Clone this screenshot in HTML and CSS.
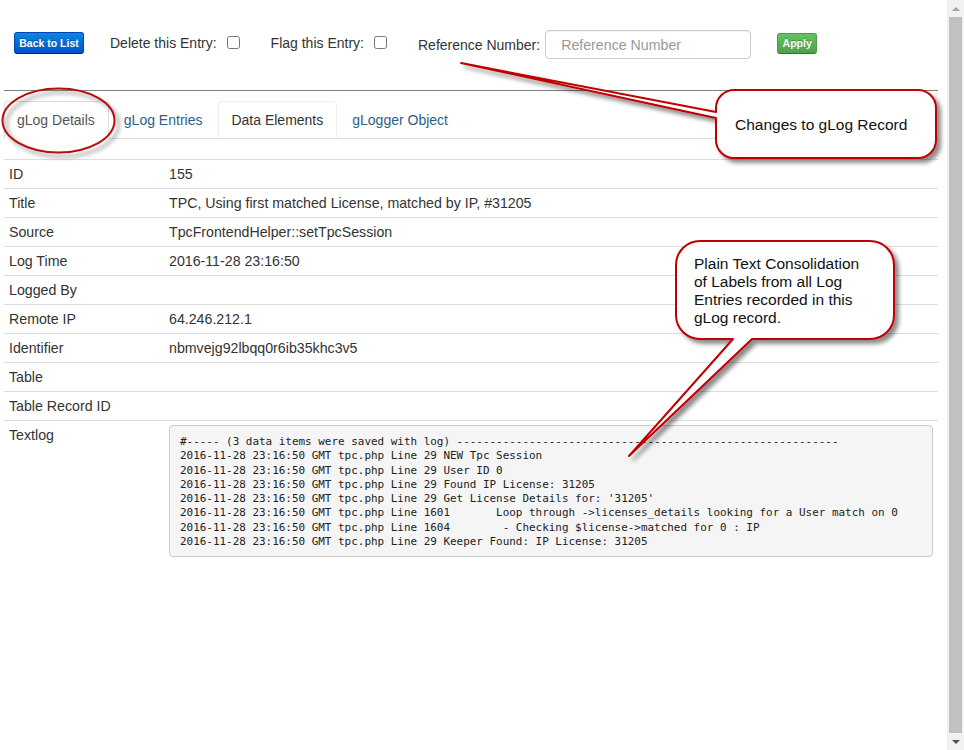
FILE: index.html
```html
<!DOCTYPE html>
<html>
<head>
<meta charset="utf-8">
<title>gLog Record</title>
<link rel="stylesheet" href="styles.css">
</head>
<body>
<div class="page">
  <div class="main">
    <div class="toolbar">
      <button class="btn btn-primary">Back to List</button>
      <label class="field field-first">Delete this Entry: <input type="checkbox" class="check"></label>
      <label class="field">Flag this Entry: <input type="checkbox" class="check"></label>
      <label class="field field-ref">Reference Number:</label>
      <input type="text" class="ref-input" placeholder="Reference Number">
      <button class="btn btn-success">Apply</button>
    </div>
    <div class="rule"></div>
    <ul class="tabs">
      <li class="tab active"><span>gLog Details</span></li>
      <li class="tab"><span>gLog Entries</span></li>
      <li class="tab hover"><span>Data Elements</span></li>
      <li class="tab"><span>gLogger Object</span></li>
    </ul>
    <table class="details">
      <tr><td class="label">ID</td><td>155</td></tr>
      <tr><td class="label">Title</td><td>TPC, Using first matched License, matched by IP, #31205</td></tr>
      <tr><td class="label">Source</td><td>TpcFrontendHelper::setTpcSession</td></tr>
      <tr><td class="label">Log Time</td><td>2016-11-28 23:16:50</td></tr>
      <tr><td class="label">Logged By</td><td></td></tr>
      <tr><td class="label">Remote IP</td><td>64.246.212.1</td></tr>
      <tr><td class="label">Identifier</td><td>nbmvejg92lbqq0r6ib35khc3v5</td></tr>
      <tr><td class="label">Table</td><td></td></tr>
      <tr><td class="label">Table Record ID</td><td></td></tr>
      <tr class="last"><td class="label">Textlog</td><td><pre class="log">#----- (3 data items were saved with log) ----------------------------------------------------------
2016-11-28 23:16:50 GMT tpc.php Line 29 NEW Tpc Session
2016-11-28 23:16:50 GMT tpc.php Line 29 User ID 0
2016-11-28 23:16:50 GMT tpc.php Line 29 Found IP License: 31205
2016-11-28 23:16:50 GMT tpc.php Line 29 Get License Details for: '31205'
2016-11-28 23:16:50 GMT tpc.php Line 1601       Loop through -&gt;licenses_details looking for a User match on 0
2016-11-28 23:16:50 GMT tpc.php Line 1604        - Checking $license-&gt;matched for 0 : IP
2016-11-28 23:16:50 GMT tpc.php Line 29 Keeper Found: IP License: 31205</pre></td></tr>
    </table>

    <svg class="annotations" width="947" height="750" viewBox="0 0 947 750">
      <defs>
        <filter id="shadow" x="-20%" y="-20%" width="140%" height="160%">
          <feDropShadow dx="4" dy="4" stdDeviation="2" flood-color="#000" flood-opacity="0.45"/>
        </filter>
      </defs>
      <ellipse cx="58.5" cy="120.5" rx="56" ry="32" class="mark" filter="url(#shadow)"/>
      <path class="callout" filter="url(#shadow)" d="M734,90 H918 A18,18 0 0 1 936,108 V140 A18,18 0 0 1 918,158 H734 A18,18 0 0 1 716,140 V118 L461,63 L716,112 V108 A18,18 0 0 1 734,90 Z"/>
      <text class="note" x="735" y="130">Changes to gLog Record</text>
      <path class="callout" filter="url(#shadow)" d="M700,241 H870 A24,24 0 0 1 894,265 V315 A24,24 0 0 1 870,339 H752 L629,456 L733,339 H700 A24,24 0 0 1 676,315 V265 A24,24 0 0 1 700,241 Z"/>
      <text class="note" x="694" y="269">Plain Text Consolidation</text>
      <text class="note" x="694" y="287">of Labels from all Log</text>
      <text class="note" x="694" y="305">Entries recorded in this</text>
      <text class="note" x="694" y="323">gLog record.</text>
    </svg>
  </div>
  <div class="scrollbar">
    <div class="sb-arrow"><span class="tri-up"></span></div>
    <div class="sb-thumb"></div>
    <div class="sb-arrow"><span class="tri-down"></span></div>
  </div>
</div>
</body>
</html>
```
FILE: styles.css
```css
* { box-sizing: border-box; }
html, body {
  margin: 0;
  padding: 0;
  background: #fff;
}
body {
  font-family: "Liberation Sans", Arial, sans-serif;
  font-size: 14px;
  color: #333;
}
.page {
  display: flex;
  width: 964px;
  height: 750px;
  overflow: hidden;
}
.main {
  flex: 1;
  position: relative;
  padding: 0 9px 0 4px;
}

/* toolbar */
.toolbar {
  margin-top: 30px;
  height: 29px;
  display: flex;
  align-items: center;
  padding-left: 10px;
}
.btn {
  border: 1px solid;
  border-radius: 3px;
  color: #fff;
  font-family: "Liberation Sans", Arial, sans-serif;
  font-weight: bold;
  font-size: 10.5px;
  padding: 0;
  text-shadow: 0 -1px 0 rgba(0,0,0,0.25);
}
.btn-primary {
  width: 70px;
  height: 22px;
  margin-bottom: 3px;
  background: linear-gradient(#0b87e0, #0050cc);
  border-color: #0046b8 #0046b8 #002a80;
}
.btn-success {
  width: 40px;
  height: 21px;
  margin-left: 26px;
  margin-bottom: 3px;
  background: linear-gradient(#62c462, #4ca34c);
  border-color: #4a9a4a #4a9a4a #387038;
}
.field {
  display: flex;
  align-items: center;
  margin-left: 31px;
  margin-bottom: 4px;
  color: #333;
}
.field-first { margin-left: 26px; }
.field-ref { margin-bottom: 0; }
.check {
  width: 13px;
  height: 13px;
  margin: 0 0 0 10px;
}
.ref-input {
  margin-left: 5px;
  width: 206px;
  height: 29px;
  border: 1px solid #ccc;
  border-radius: 4px;
  padding: 0 15px;
  font-family: "Liberation Sans", Arial, sans-serif;
  font-size: 14.2px;
  color: #555;
  box-shadow: inset 0 1px 1px rgba(0,0,0,0.05);
}
.ref-input::placeholder { color: #999; }

.rule {
  margin-top: 31px;
  border-top: 1px solid #808080;
}

/* tabs */
.tabs {
  list-style: none;
  margin: 10px 0 0;
  padding: 0;
  display: flex;
  border-bottom: 1px solid #ddd;
}
.tab {
  margin-right: 2px;
  margin-bottom: -1px;
  padding: 8px 13px 8px 12px;
  line-height: 20px;
  border: 1px solid transparent;
  border-radius: 4px 4px 0 0;
  color: #2b5f86;
}
.tab.active {
  color: #555;
  background: #fff;
  border-color: #ddd #ddd transparent;
}
.tab.hover {
  color: #333;
  border-color: #eee #eee #ddd;
}

/* details table */
.details {
  margin-top: 20px;
  width: 100%;
  border-collapse: collapse;
  font-size: 14.2px;
}
.details td {
  border-top: 1px solid #ddd;
  padding: 4px 5px;
  line-height: 20px;
  vertical-align: top;
  height: 29px;
}
.details td.label {
  width: 160px;
}
.log {
  margin: 0;
  padding: 9px 9px 7px 10px;
  font-family: "DejaVu Sans Mono", "Liberation Mono", monospace;
  font-size: 10.95px;
  line-height: 14.3px;
  color: #222;
  background: #f5f5f5;
  border: 1px solid #ccc;
  border-radius: 4px;
  white-space: pre;
  overflow: hidden;
}

/* annotations */
.annotations {
  position: absolute;
  top: 0;
  left: 0;
  pointer-events: none;
  overflow: visible;
}
.mark {
  fill: none;
  stroke: #b40e0e;
  stroke-width: 2;
}
.callout {
  fill: #fff;
  stroke: #c00000;
  stroke-width: 2;
  stroke-linejoin: round;
}
.note {
  font-family: "Liberation Sans", Arial, sans-serif;
  font-size: 15.5px;
  fill: #111;
}

/* scrollbar */
.scrollbar {
  width: 17px;
  background: #f1f1f1;
  display: flex;
  flex-direction: column;
}
.sb-arrow {
  height: 17px;
  display: flex;
  align-items: center;
  justify-content: center;
}
.sb-thumb {
  flex: 1;
  margin: 0 2px;
  background: #c1c1c1;
}
.tri-up {
  width: 0;
  height: 0;
  border-left: 4px solid transparent;
  border-right: 4px solid transparent;
  border-bottom: 4px solid #a3a3a3;
}
.tri-down {
  width: 0;
  height: 0;
  border-left: 4px solid transparent;
  border-right: 4px solid transparent;
  border-top: 4px solid #505050;
}
```
